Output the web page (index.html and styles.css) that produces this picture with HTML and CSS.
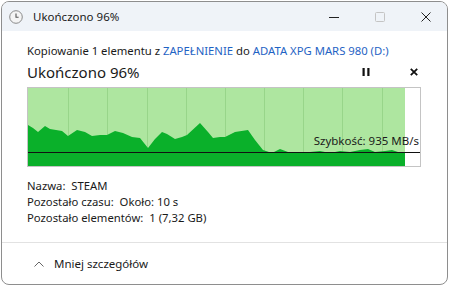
FILE: index.html
```html
<!DOCTYPE html>
<html lang="pl">
<head>
<meta charset="utf-8">
<link rel="stylesheet" href="styles.css">
</head>
<body>
<div class="window">
  <div class="titlebar">
    <svg class="app-icon" width="14" height="14" viewBox="0 0 14 14"><circle cx="7" cy="7" r="6.3" fill="#f4f4f4" stroke="#8a8a8a" stroke-width="1"/><path d="M7 3.5V7.3H9.6" fill="none" stroke="#555" stroke-width="1.1"/></svg>
    <span class="title">Ukończono 96%</span>
    <div class="caption-buttons">
      <svg class="cb" width="10" height="10" viewBox="0 0 10 10"><path d="M0 5.5H10" stroke="#222" stroke-width="1"/></svg>
      <svg class="cb" width="10" height="10" viewBox="0 0 10 10"><rect x="0.5" y="0.5" width="9" height="9" rx="1" fill="none" stroke="#c4c4c4" stroke-width="1"/></svg>
      <svg class="cb" width="10" height="10" viewBox="0 0 10 10"><path d="M0.5 0.5L9.5 9.5M9.5 0.5L0.5 9.5" stroke="#222" stroke-width="1"/></svg>
    </div>
  </div>
  <div class="content">
    <div class="from">Kopiowanie 1 elementu z <span class="link">ZAPEŁNIENIE</span> do <span class="link">ADATA XPG MARS 980 (D:)</span></div>
    <div class="status-row">
      <div class="status">Ukończono 96%</div>
      <div class="actions">
        <svg width="8" height="8" viewBox="0 0 8 8"><rect x="0.5" y="0" width="2.2" height="8" fill="#111"/><rect x="5.3" y="0" width="2.2" height="8" fill="#111"/></svg>
        <svg width="8" height="8" viewBox="0 0 8 8"><path d="M0.8 0.8L7.2 7.2M7.2 0.8L0.8 7.2" stroke="#111" stroke-width="1.8"/></svg>
      </div>
    </div>
    <div class="chart">
      <svg class="graph" width="392" height="78" viewBox="0 0 392 78">
        <rect x="0" y="0" width="377" height="78" fill="#aee6a0"/>
        <g stroke="#98d58a" stroke-width="1">
          <path d="M40.5 0V78M79.5 0V78M119.5 0V78M158.5 0V78M197.5 0V78M236.5 0V78M275.5 0V78M314.5 0V78M354.5 0V78"/>
        </g>
        <path fill="#0ab02a" d="M0 37L5 40L10 44L17 38L22 41L34 43L40 48L49 42L57 44L64 48L72 47L79 47L87 43L95 45L104 49L112 50L120 60L127 51L134 44L139 46L147 51L154 49L159 47L172 35L180 44L185 50L192 49L197 49L207 44L220 42L227 52L235 62L244 65L252 61L260 64L272 65L282 64L292 63L302 65L312 63L322 64L332 62L340 61L347 64L357 63L364 62L370 64L377 65L377 78L0 78Z"/>
        <path d="M0 64.5H392" stroke="#111" stroke-width="1"/>
      </svg>
      <span class="speed">Szybkość: 935 MB/s</span>
    </div>
    <div class="details">
      <div>Nazwa:&nbsp; STEAM</div>
      <div>Pozostało czasu:&nbsp; Około: 10 s</div>
      <div>Pozostało elementów:&nbsp; 1 (7,32 GB)</div>
    </div>
  </div>
  <div class="footer">
    <svg width="10" height="6" viewBox="0 0 10 6"><path d="M0.5 5.5L5 1L9.5 5.5" fill="none" stroke="#666" stroke-width="1"/></svg>
    <span>Mniej szczegółów</span>
  </div>
</div>
</body>
</html>
```

FILE: styles.css
```css
html, body {
  margin: 0;
  padding: 0;
  background: #ffffff;
}
body {
  font-family: "Noto Sans", "Open Sans", sans-serif;
  color: #1a1a1a;
  font-size: 11.3px;
}
.window {
  margin: 1px 0 0 1px;
  width: 445px;
  height: 282px;
  border: 1px solid #8e8e8e;
  border-radius: 8px;
  overflow: hidden;
  display: flex;
  flex-direction: column;
  background: #ffffff;
}
.titlebar {
  height: 29px;
  flex: none;
  background: #eff3f8;
  display: flex;
  align-items: center;
  padding-left: 7px;
}
.app-icon {
  flex: none;
}
.title {
  margin-left: 10px;
  font-size: 11.5px;
}
.caption-buttons {
  margin-left: auto;
  display: flex;
  gap: 36px;
  padding-right: 16px;
}
.content {
  padding: 11px 0 0 25px;
  flex: 1;
}
.from {
  line-height: 18px;
}
.link {
  color: #1f63c4;
}
.status-row {
  display: flex;
  align-items: center;
  height: 24px;
}
.status {
  font-size: 15px;
}
.actions {
  margin-left: auto;
  display: flex;
  gap: 40px;
  padding-right: 29px;
}
.chart {
  position: relative;
  width: 392px;
  height: 78px;
  border: 1px solid #c4c4c4;
  margin-top: 3px;
}
.graph {
  display: block;
}
.speed {
  position: absolute;
  right: 1px;
  top: 46px;
  line-height: 14px;
  font-size: 11.5px;
}
.details {
  margin-top: 11px;
  line-height: 16px;
}
.footer {
  height: 41px;
  flex: none;
  border-top: 1px solid #e2e2e2;
  display: flex;
  align-items: center;
  padding-left: 32px;
  gap: 10px;
}
.footer span {
  font-size: 11.5px;
}
```
